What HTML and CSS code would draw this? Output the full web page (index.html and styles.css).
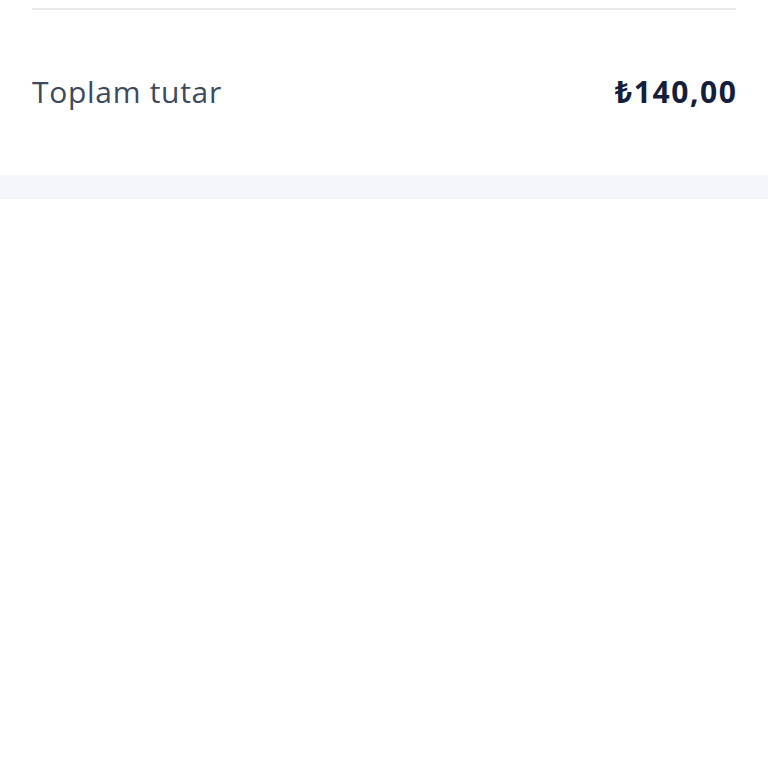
FILE: index.html
```html
<!DOCTYPE html>
<html lang="tr">
<head>
  <meta charset="UTF-8" />
  <meta name="viewport" content="width=device-width, initial-scale=1.0" />
  <title>Toplam tutar</title>
  <link rel="stylesheet" href="styles.css">
</head>
<body>
  <div class="summary">
    <div class="divider"></div>
    <div class="total-row">
      <span class="total-label">Toplam tutar</span>
      <span class="total-value">₺140,00</span>
    </div>
  </div>
  <div class="spacer"></div>
</body>
</html>
```

FILE: styles.css
```css
* {
  margin: 0;
  padding: 0;
  box-sizing: border-box;
}

body {
  background: #ffffff;
  font-family: 'Open Sans', 'Noto Sans', sans-serif;
}

.summary {
  padding: 8px 32px 0;
}

.divider {
  height: 2px;
  background-color: #ebebef;
}

.total-row {
  display: flex;
  justify-content: space-between;
  align-items: center;
  height: 165px;
  padding-bottom: 2px;
}

.total-label {
  font-size: 30px;
  color: #3e4a5e;
  letter-spacing: 0.7px;
}

.total-value {
  font-size: 30px;
  font-weight: 700;
  color: #14203b;
  letter-spacing: 1.6px;
  margin-right: -1.6px;
}

.spacer {
  height: 24px;
  background-color: #f5f6fb;
}
```
